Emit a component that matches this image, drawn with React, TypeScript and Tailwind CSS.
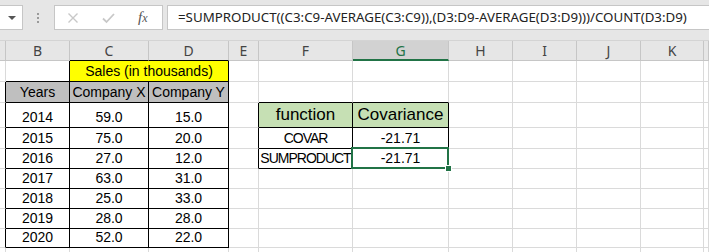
import React from 'react';

type CellData = { text: string; bg?: string; big?: boolean; span?: number; tight?: boolean };

const colLetters = ['', 'B', 'C', 'D', 'E', 'F', 'G', 'H', 'I', 'J', 'K', ''];

const years = [
  ['2014', '59.0', '15.0'],
  ['2015', '75.0', '20.0'],
  ['2016', '27.0', '12.0'],
  ['2017', '63.0', '31.0'],
  ['2018', '25.0', '33.0'],
  ['2019', '28.0', '28.0'],
  ['2020', '52.0', '22.0'],
];

const cells: Record<string, CellData> = {
  '1-2': { text: 'Sales (in thousands)', bg: 'bg-[#ffff00]', span: 2 },
  '2-1': { text: 'Years', bg: 'bg-[#bfbfbf]' },
  '2-2': { text: 'Company X', bg: 'bg-[#bfbfbf]' },
  '2-3': { text: 'Company Y', bg: 'bg-[#bfbfbf]' },
  '3-5': { text: 'function', bg: 'bg-[#c6e0b4]', big: true },
  '3-6': { text: 'Covariance', bg: 'bg-[#c6e0b4]', big: true },
  '4-5': { text: 'COVAR', tight: true },
  '4-6': { text: '-21.71' },
  '5-5': { text: 'SUMPRODUCT', tight: true },
  '5-6': { text: '-21.71' },
};
years.forEach((y, i) => {
  y.forEach((v, j) => {
    cells[`${i + 3}-${j + 1}`] = { text: v };
  });
});

// cells that carry a black outline
const boxed = (r: number, c: number) =>
  (r === 1 && (c === 2 || c === 3)) ||
  (r >= 2 && r <= 9 && c >= 1 && c <= 3) ||
  (r >= 3 && r <= 5 && (c === 5 || c === 6));

const FormulaBar = () => (
  <div className="h-[41px] bg-[#e6e6e6] border-b border-[#d4d4d4] pt-[5px] flex items-start">
    <div className="w-[23px] h-[25px] bg-white border-y border-r border-[#c6c6c6] flex items-center justify-end pr-[6px]">
      <div className="w-0 h-0 border-l-[4px] border-r-[4px] border-t-[4px] border-l-transparent border-r-transparent border-t-[#555]" />
    </div>
    <div className="ml-[14px] h-[25px] flex flex-col justify-center gap-[2px]">
      <span className="w-[2px] h-[2px] bg-[#9a9a9a]" />
      <span className="w-[2px] h-[2px] bg-[#9a9a9a]" />
      <span className="w-[2px] h-[2px] bg-[#9a9a9a]" />
    </div>
    <div className="ml-[15px] w-[109px] h-[25px] bg-white border border-[#c6c6c6] flex items-center">
      <svg width="12" height="12" viewBox="0 0 12 12" className="ml-[12px]">
        <path d="M1.5 1.5 L10.5 10.5 M10.5 1.5 L1.5 10.5" stroke="#c8c8c8" strokeWidth="1.4" />
      </svg>
      <svg width="13" height="12" viewBox="0 0 13 12" className="ml-[23px]">
        <path d="M1 6.5 L4.5 10 L12 2" stroke="#c8c8c8" strokeWidth="1.8" fill="none" />
      </svg>
      <span className="ml-[23px] font-['Liberation_Serif',serif] italic text-[15px] text-[#555] leading-none">
        f<span className="text-[12px]">x</span>
      </span>
    </div>
    <div className="ml-[4px] flex-1 h-[25px] bg-white border-y border-l border-[#c6c6c6] flex items-center pl-[10px] font-['Noto_Sans',sans-serif] text-[13.3px] text-[#222] whitespace-nowrap">
      =SUMPRODUCT((C3:C9-AVERAGE(C3:C9)),(D3:D9-AVERAGE(D3:D9)))/COUNT(D3:D9)
    </div>
  </div>
);

export default function App() {
  const rowIds = [1, 2, 3, 4, 5, 6, 7, 8, 9, 10];

  return (
    <div className="w-[709px] h-[252px] overflow-hidden bg-white">
      <FormulaBar />
      <div className="grid grid-cols-[6px_64px_79px_80px_30px_94px_96px_64px_64px_64px_63px_5px] grid-rows-[20px_21px_21px_25px_21px_20px_20px_20px_20px_19px_20px]">
        {/* column headers */}
        {colLetters.map((l, c) =>
          c === 6 ? (
            <div
              key={`h${c}`}
              className="bg-[#d2d2d2] border-r border-r-[#c6c6c6] border-b-2 border-b-[#217346] flex items-center justify-center font-['Noto_Sans',sans-serif] text-[14px] text-[#217346]"
            >
              {l}
            </div>
          ) : (
            <div
              key={`h${c}`}
              className={`bg-[#e6e6e6] border-r border-r-[#c6c6c6] border-b ${
                c === 2 || c === 3 ? 'border-b-black' : 'border-b-[#c6c6c6]'
              } flex items-center justify-center font-['Noto_Sans',sans-serif] text-[14px] text-[#444]`}
            >
              {l}
            </div>
          )
        )}

        {/* sheet rows */}
        {rowIds.map((r) =>
          colLetters.map((_, c) => {
            if (r === 1 && c === 3) return null;
            const d = cells[`${r}-${c}`];
            const span = d?.span ?? 1;
            const last = c + span - 1;
            const rightBlack = boxed(r, last) || boxed(r, last + 1);
            const bottomBlack = boxed(r, c) || boxed(r + 1, c);
            const selected = r === 5 && c === 6;
            return (
              <div
                key={`${r}-${c}`}
                className={`relative border-r border-b ${rightBlack ? 'border-r-black' : 'border-r-[#dadada]'} ${
                  bottomBlack ? 'border-b-black' : 'border-b-[#dadada]'
                } ${d?.bg ?? 'bg-white'} ${span === 2 ? 'col-span-2' : ''} flex items-end justify-center overflow-visible`}
              >
                {d && (
                  <span
                    className={`font-['Liberation_Sans',Arial,sans-serif] text-black whitespace-nowrap ${
                      d.big ? 'text-[17px] leading-[24px]' : 'text-[14px] leading-[20px]'
                    } ${d.tight ? 'tracking-[-1px]' : ''}`}
                  >
                    {d.text}
                  </span>
                )}
                {selected && (
                  <>
                    <div className="absolute -left-[2px] -top-[2px] -right-[1px] -bottom-[1px] border-2 border-[#217346] z-10" />
                    <div className="absolute -right-[4px] -bottom-[4px] w-[7px] h-[7px] bg-[#217346] border border-white z-20" />
                  </>
                )}
              </div>
            );
          })
        )}
      </div>
    </div>
  );
}
